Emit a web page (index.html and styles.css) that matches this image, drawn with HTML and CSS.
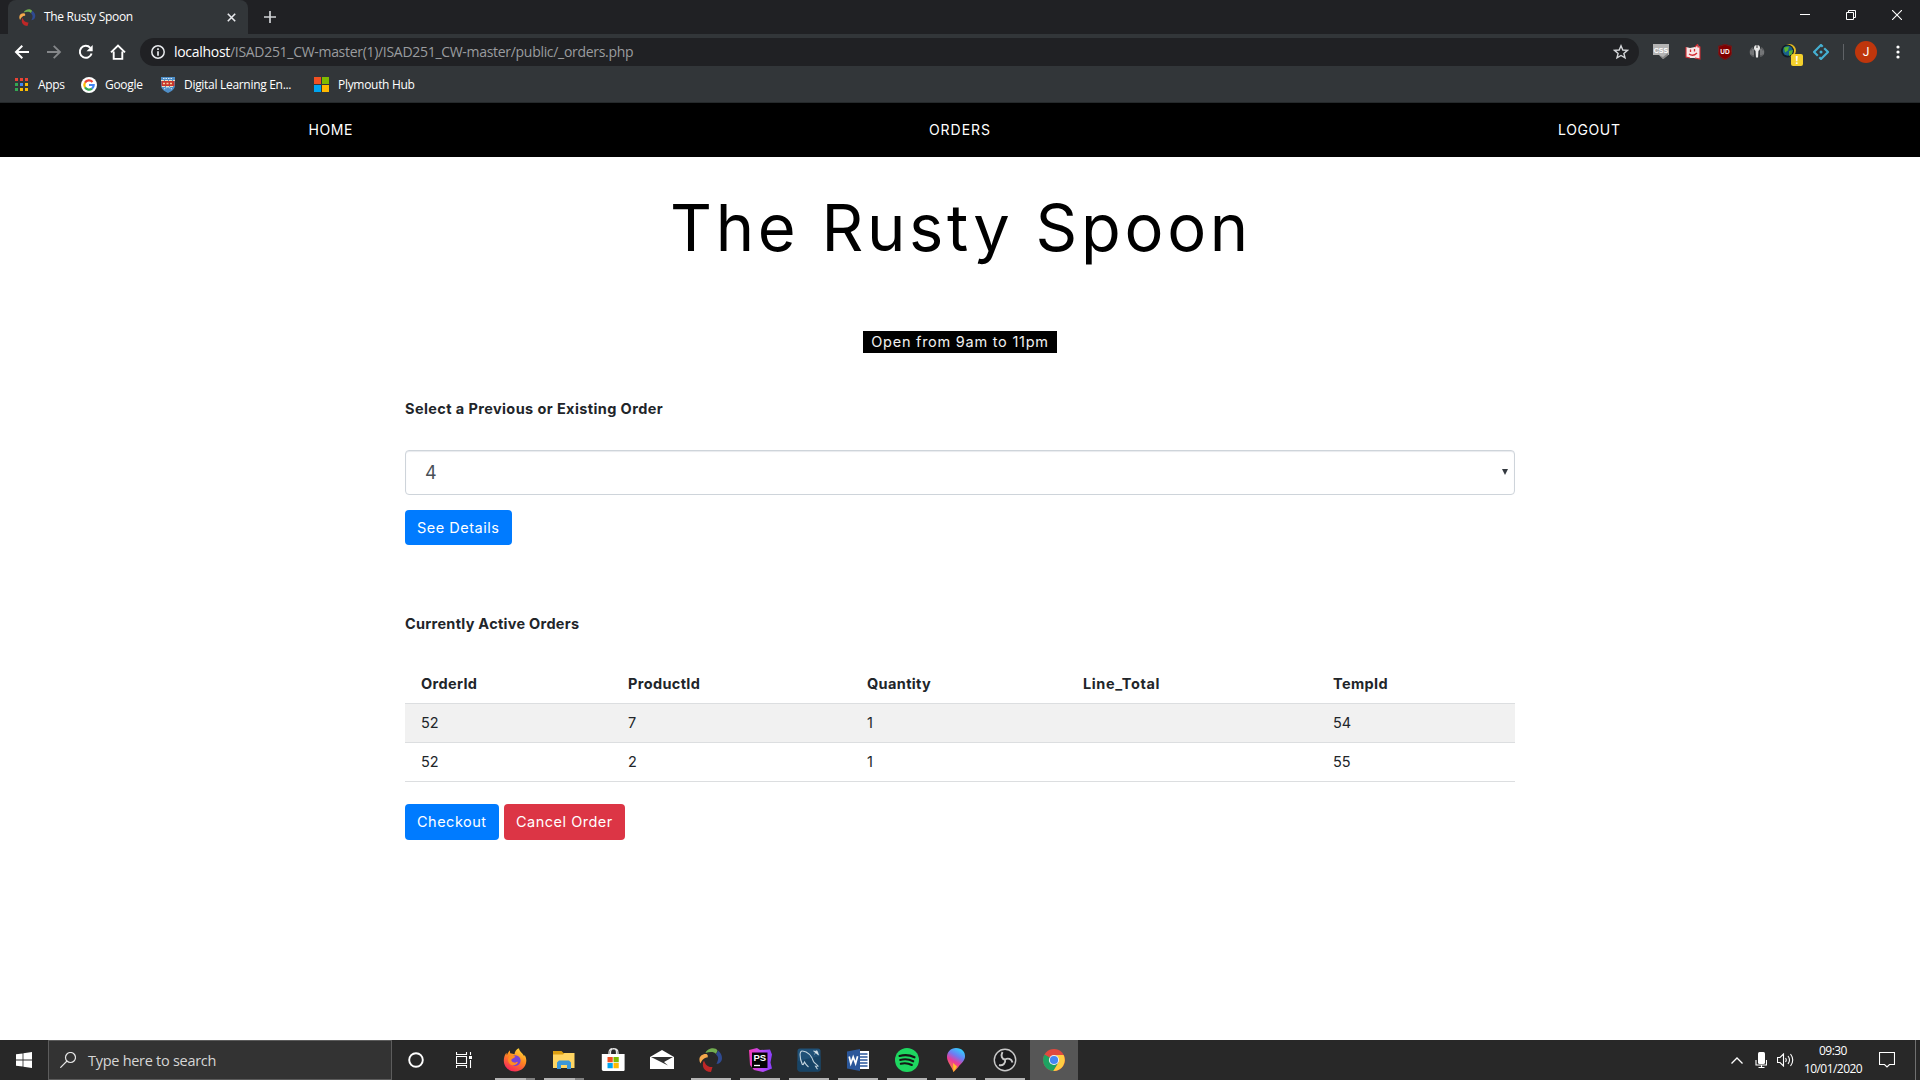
FILE: index.html
```html
<!DOCTYPE html>
<html lang="en">
<head>
<meta charset="utf-8">
<title>The Rusty Spoon</title>
<link rel="stylesheet" href="styles.css">
</head>
<body>
<div class="screen">
  <header class="browser">
    <div class="tabstrip">
      <div class="tab">
        <svg class="favicon" viewBox="0 0 24 24"><use href="#wamp"/></svg>
        <span class="tab-title">The Rusty Spoon</span>
        <svg class="tab-close" viewBox="0 0 9 9"><path d="M.8.8l7.4 7.4M8.2.8L.8 8.2" stroke="#e8eaed" stroke-width="1.6"/></svg>
      </div>
      <svg class="newtab" viewBox="0 0 12 12"><path d="M6 0v12M0 6h12" stroke="#d0d2d5" stroke-width="1.7"/></svg>
      <div class="window-controls">
        <svg viewBox="0 0 10 10"><path d="M0 4.5h10" stroke="#fff"/></svg>
        <svg viewBox="0 0 10 10"><path d="M.5 2.5h7v7h-7zM2.5 2.5v-2h7v7h-2" fill="none" stroke="#fff"/></svg>
        <svg viewBox="0 0 10 10"><path d="M0 0l10 10M10 0L0 10" stroke="#fff" stroke-width="1.1"/></svg>
      </div>
    </div>
    <div class="toolbar">
      <div class="nav-buttons">
        <svg viewBox="0 0 16 16"><path d="M15 8H2.5M8.3 1.8L2 8l6.3 6.2" fill="none" stroke="#fff" stroke-width="2"/></svg>
        <svg viewBox="0 0 16 16"><path d="M1 8h12.500M7.700 1.800L14 8l-6.300 6.200" fill="none" stroke="#85878a" stroke-width="1.800"/></svg>
        <svg viewBox="0 0 16 16"><path d="M13.600 9.500A6 6 0 1 1 12.300 3.800" fill="none" stroke="#fff" stroke-width="2"/><path d="M14.700 1v6.200H8.500z" fill="#fff"/></svg>
        <svg viewBox="0 0 16 16"><path d="M3.700 7.500v7.400h8.600V7.500M1 8.400L8 1.500l7 6.900" fill="none" stroke="#fff" stroke-width="1.900"/></svg>
      </div>
      <div class="omnibox">
        <svg class="info" viewBox="0 0 14 14"><circle cx="7" cy="7" r="6.200" fill="none" stroke="#e8eaed" stroke-width="1.500"/><path d="M7 6.200v4.500M7 3.300v1.700" stroke="#e8eaed" stroke-width="1.700"/></svg>
        <span class="url"><b>localhost</b>/ISAD251_CW-master(1)/ISAD251_CW-master/public/_orders.php</span>
        <svg class="star" viewBox="0 0 16 16"><path d="M8 1.800l1.800 4.200 4.600.4-3.500 3 1.100 4.500L8 11.500l-4 2.400 1.100-4.500-3.500-3 4.600-.4z" fill="none" stroke="#d5d7da" stroke-width="1.400"/></svg>
      </div>
      <div class="extensions">
        <svg viewBox="0 0 16 16"><path d="M0 0h16v11h-2l-4 4-4-4H0z" fill="#b4b4b4"/><path d="M7 11.500l3 1.500 5-4v2.500L10.500 15z" fill="#858585"/><text x="8" y="8.500" text-anchor="middle" class="glyph css-glyph">CSS</text></svg>
        <svg viewBox="0 0 16 16"><path d="M1 3l4 1 5-1 3-3 .5 3 1.500-.5V15l-6-1-4 0-4-1z" fill="#f8e6e6"/><path d="M1 3v10l4 1M10 3l2.500-2.500.5 2.500 2 0V15l-5-1" stroke="#d42b32" stroke-width="1.100" fill="none"/><path d="M5.500 5.500v2.500M9.500 5v2.500M4 10q4 3 8-1" stroke="#d42b32" stroke-width="1.300" fill="none"/></svg>
        <svg viewBox="0 0 16 16"><path d="M8 0l7 2v6c0 4-3 6-7 8-4-2-7-4-7-8V2z" fill="#800000"/><path d="M8 .5l6.500 2v6c0 4-3 5-6.500 7-3.500-2-6.500-3-6.500-7v-6z" fill="none" stroke="#6b2020"/><text x="8" y="9.500" text-anchor="middle" class="glyph ub-glyph">UD</text></svg>
        <svg viewBox="0 0 16 16"><path d="M3.500 3C0 5-.5 10 3 12.500l2 .5V5zM12.500 3c3.500 2 4 7 .5 9.500l-2 .5V5z" fill="#5c5e60"/><path d="M2 6.500v4M4 5v6M12 5v6M14 6.500v4" stroke="#8c8e90"/><circle cx="8" cy="4" r="3" fill="#e8e8e8"/><path d="M6.500 6h3l-.5 7.500H7z" fill="#e8e8e8"/><path d="M8 1v3" stroke="#333"/></svg>
        <div class="ext-badged">
          <svg viewBox="0 0 16 16"><circle cx="8.500" cy="6.500" r="6.500" fill="#e4b920"/><circle cx="6.500" cy="7" r="6.500" fill="#111c24"/><circle cx="6.800" cy="6.800" r="5" fill="#19608a"/><path d="M3 3.500l5-1-1 4-3 2zM8 7l4-1-1 4-3 2z" fill="#59b32e"/></svg>
          <span class="ext-badge">!</span>
        </div>
        <svg viewBox="0 0 16 16"><path d="M9.700 2.700L8 1 1 8l3.800 3.800M6.300 13.300L8 15l7-7-3.800-3.800" fill="none" stroke="#45b0d2" stroke-width="2.200"/><circle cx="8" cy="8" r="1.500" fill="#45b0d2"/></svg>
      </div>
      <div class="divider"></div>
      <div class="avatar">J</div>
      <svg class="menu-dots" viewBox="0 0 4 16"><circle cx="2" cy="3" r="1.600"/><circle cx="2" cy="8" r="1.600"/><circle cx="2" cy="13" r="1.600"/></svg>
    </div>
    <div class="bookmarks">
      <svg class="bm-apps" viewBox="0 0 13 13"><path d="M0 0h3v3H0zM5 0h3v3H5zM10 0h3v3h-3z" fill="#ea4335"/><path d="M0 5h3v3H0zM0 10h3v3H0z" fill="#34a853"/><path d="M5 5h3v3H5z" fill="#4285f4"/><path d="M10 5h3v3h-3zM5 10h3v3H5zM10 10h3v3h-3z" fill="#fbbc04"/></svg>
      <span class="bm-1">Apps</span>
      <svg class="bm-google" viewBox="0 0 16 16"><circle cx="8" cy="8" r="8" fill="#fff"/><g fill="none" stroke-width="2.200"><path d="M11.500 4.900A4.700 4.700 0 0 0 4 5.600" stroke="#ea4335"/><path d="M4 5.600a4.700 4.700 0 0 0 0 4.800" stroke="#fbbc05"/><path d="M4 10.400a4.700 4.700 0 0 0 7 1.200" stroke="#34a853"/><path d="M11 11.600A4.700 4.700 0 0 0 12.700 8H8" stroke="#4285f4"/></g></svg>
      <span class="bm-2">Google</span>
      <svg class="bm-shield" viewBox="0 0 14 16"><path d="M0 0h14v8c0 4-3 6-7 8-4-2-7-4-7-8z" fill="#4f8fc8"/><path d="M.5 4h13v5H.5z" fill="#c8372d"/><path d="M0 3.500h14M1 9.500h12" stroke="#eee0c0" stroke-dasharray="3 1"/><path d="M3 12l4-2 4 2M2 1.500h10" stroke="#d9e8f4" fill="none" stroke-dasharray="1.500 1"/><path d="M2 6.500h10" stroke="#f3d6a0" stroke-width="1.500" stroke-dasharray="2 1.500"/></svg>
      <span class="bm-3">Digital Learning En...</span>
      <svg class="bm-ms" viewBox="0 0 15 15"><use href="#mslogo"/></svg>
      <span class="bm-4">Plymouth Hub</span>
    </div>
  </header>

  <nav class="site-nav">
    <a>HOME</a><a class="wide">ORDERS</a><a>LOGOUT</a>
  </nav>
  <main class="page">
    <h1>The Rusty Spoon</h1>
    <div class="hours-row"><span class="hours">Open from 9am to 11pm</span></div>
    <div class="container">
      <p class="label">Select a Previous or Existing Order</p>
      <div class="select"><span>4</span><svg viewBox="0 0 6 6"><path d="M0 0h6L3 6z" fill="#343a40"/></svg></div>
      <div class="actions details"><a class="btn primary">See Details</a></div>
      <p class="label second">Currently Active Orders</p>
      <table class="orders">
        <colgroup><col class="c1"><col class="c2"><col class="c3"><col class="c4"><col class="c5"></colgroup>
        <thead><tr><th>OrderId</th><th>ProductId</th><th>Quantity</th><th class="wide">Line_Total</th><th>TempId</th></tr></thead>
        <tbody>
          <tr><td>52</td><td>7</td><td>1</td><td></td><td>54</td></tr>
          <tr><td>52</td><td>2</td><td>1</td><td></td><td>55</td></tr>
        </tbody>
      </table>
      <div class="actions"><a class="btn primary checkout">Checkout</a><a class="btn danger">Cancel Order</a></div>
    </div>
  </main>

  <footer class="taskbar">
    <div class="cell"><svg class="i16" viewBox="0 0 16 16"><path d="M0 2.300L6.600 1.400v6.200H0zM7.400 1.300L16 0v7.600H7.400zM0 8.400h6.600v6.200L0 13.700zM7.400 8.400H16V16l-8.600-1.300z" fill="#fff"/></svg></div>
    <div class="search">
      <svg class="i16" viewBox="0 0 16 16"><circle cx="10.500" cy="5.500" r="5" fill="none" stroke="#e6e6e6" stroke-width="1.200"/><path d="M7 9L.3 15.700" stroke="#e6e6e6" stroke-width="1.200"/></svg>
      <span>Type here to search</span>
    </div>
    <div class="cell"><svg class="i16" viewBox="0 0 16 16"><circle cx="8" cy="8" r="6.800" fill="none" stroke="#fff" stroke-width="1.900"/></svg></div>
    <div class="cell"><svg class="i16" viewBox="0 0 16 16"><path d="M.5 0v2.500h10V0M.5 16v-2.500h10V16M.5 4.500h10v7H.5zM14.500 0v3M14.500 8v8" fill="none" stroke="#fff" stroke-width="1.100"/><path d="M13 4h3v3h-3z" fill="#fff"/></svg></div>
    <div class="apps">
      <div class="app run multi"><svg viewBox="0 0 24 24"><defs><linearGradient id="ff" x1=".8" y1="0" x2=".3" y2="1"><stop offset="0" stop-color="#ffe040"/><stop offset=".45" stop-color="#ff8a1f"/><stop offset="1" stop-color="#f5235c"/></linearGradient></defs><path d="M12 23.500C5.500 23.500.800 18.700.800 12.600c0-3.500 1.200-5.800 2.600-7.800l.5 2.400C4.800 5 6 3 6.800 2.500l.4 2.800c2 .2 3.300.5 4.300 1C11.700 3.500 13.500 1 16 .300c.2 2.500 1.600 3.400 3.300 5.100.9.900 1.500 2 1.800 2.900l.6-1.200c1.200 2 1.700 4 1.600 6-.3 6-5 10.400-11.300 10.400z" fill="url(#ff)"/><circle cx="12.300" cy="12.600" r="5.300" fill="#7543d8"/><path d="M6 8c2 .2 4.500-1 6.500.8L10 10.500c-2 .5-2 2-1 3 1 1 4 2 6 0-1 5.500-10 5-10-2z" fill="#ff8c23"/></svg></div>
      <div class="app run multi"><svg viewBox="0 0 24 24"><path d="M1 3h8.500l2 2H22v2H1z" fill="#dc9f12"/><path d="M1 6.500h10l1.500-1.500H22.500v15H1z" fill="#ffd562"/><path d="M5 21v-6.500L7 12.500h10l2 2V21h-4v-4H9v4z" fill="#3b97d9"/></svg></div>
      <div class="app"><svg viewBox="0 0 24 24"><path d="M8 7V4.500C8 2 9.500.700 11.500.700M9.500 7V4.500c0-5 6-5 6 0V7M12 .700c4 0 5 1.300 5 3.800V7" fill="none" stroke="#e8e8e8" stroke-width="1.200"/><path d="M.8 6h22.800v15.500c0 1-.5 1.500-1.500 1.500H2.500c-1 0-1.700-.7-1.700-1.700z" fill="#fff"/><g transform="translate(6.500 9) scale(.75)"><use href="#mslogo"/></g></svg></div>
      <div class="app"><svg viewBox="0 0 24 24"><path d="M0 9l12-7 12 7v12H0z" fill="#fff"/><path d="M1 9h22l-9 5 4 3.500L1 9z" fill="#303030"/></svg></div>
      <div class="app run"><svg viewBox="0 0 24 24"><g id="wamp"><path d="M6.500 5c1.500-5 10-6.500 12-2.500l-1.500 3.500C15 3.500 11 3.500 6.500 5z" fill="#72ad50"/><path d="M19 2.500c6 4.500 5 13-1.500 13.500C19 12 20.500 9.500 17 6.500z" fill="#2f4a91"/><path d="M7.500 6c1.500 1 1.500 2 1 3.500C5 9.500 3 12 1.500 15.500-1.500 10 2 5.500 7.500 6z" fill="#f6a94c"/><path d="M5 12.500c1.500 4.500 4 7 8.500 6.500L12 24C5 24 2 18 5 12.500z" fill="#bf2727"/></g></svg></div>
      <div class="app run"><svg viewBox="0 0 24 24"><defs><linearGradient id="ps"><stop offset="0" stop-color="#f73ab5"/><stop offset=".55" stop-color="#b74af7"/><stop offset="1" stop-color="#8a3ffc"/></linearGradient></defs><path d="M1 2l8-2 3 2 10-.5 2 5-1.500 8 1.500 6-9 3.500-9-2L2 17z" fill="url(#ps)"/><path d="M4 4.500h15.500V20H4z" fill="#050505"/><text x="5.500" y="13" class="glyph ps-glyph">PS</text><path d="M6 17.500h6" stroke="#fff" stroke-width="1.300"/></svg></div>
      <div class="app run"><svg viewBox="0 0 24 24"><rect x=".5" y=".5" width="23" height="23" rx="2.500" fill="#205177"/><path d="M.5 13L23.500 8v13q0 2.500-2.500 2.500H3q-2.500 0-2.500-2.500z" fill="#174466"/><path d="M5.500 17C2 9 2.500 2.500 5.500 3c7 1 9.500 6 11 10.500 1 2 3 2.500 4.500 4.500l-2.500.3 2 3M6 17l1.500-3c1 2 2 3.500 4 5" fill="none" stroke="#c4d5df" stroke-width="1.100"/><path d="M16.500 3l5 4-1-3.500zM20 2l-2.500 4.500" stroke="#dce7ed" stroke-width=".6" fill="#dce7ed"/></svg></div>
      <div class="app run"><svg viewBox="0 0 24 24"><path d="M12 3h11v18H12z" fill="#fff"/><path d="M14 6h7.500M14 9h7.500M14 12h7.500M14 15h7.500M14 18h7.500" stroke="#2b579a" stroke-width="1.400"/><path d="M1 3.500L14 1v22L1 20.500z" fill="#2b579a"/><path d="M3.200 8.500l1.600 7 2.400-6.500 2.400 6.500 2-7.200" fill="none" stroke="#fff" stroke-width="1.700"/></svg></div>
      <div class="app run"><svg viewBox="0 0 24 24"><circle cx="12" cy="12" r="12" fill="#1ed760"/><path d="M4.500 8c5-1.500 10.500-1 15 1.300M5.200 12c4.500-1.300 9-.8 13 1.300M5.800 15.700c4-.9 7.500-.6 11 1.300" fill="none" stroke="#151515" stroke-width="2.100" stroke-linecap="round"/></svg></div>
      <div class="app run"><svg viewBox="0 0 24 24"><defs><linearGradient id="p3" x1=".75" y1="0" x2=".3" y2="1"><stop offset="0" stop-color="#2ad8ff"/><stop offset=".35" stop-color="#6f7cf2"/><stop offset=".6" stop-color="#e93c9c"/><stop offset="1" stop-color="#ff8b28"/></linearGradient></defs><path d="M12 0c6 0 9.500 4 9 9-.6 5-5.500 7.500-7 10.500L9.500 24c-1.500-5-6.500-10-6.500-15C3 4 6.500 0 12 0z" fill="url(#p3)"/><path d="M9 15l4 3.500L9.500 24z" fill="#ffc02b"/></svg></div>
      <div class="app run"><svg viewBox="0 0 24 24"><circle cx="12" cy="12" r="10.700" fill="#1a1a1c" stroke="#c8c8c8" stroke-width="1.400"/><path d="M9.500 4C7.500 8 9 11 12 11.500M12 11.500c3-2 6.500-.5 7.500 3M12 11.500c1 3.500-2 6.500-6 5.500" fill="none" stroke="#c8c8c8" stroke-width="1.900"/></svg></div>
      <div class="app active"><svg viewBox="0 0 24 24"><circle cx="12" cy="12" r="11" fill="#e04a3f"/><path d="M2.500 6.500A11 11 0 0 0 11.300 23L16.500 14.500 12 12z" fill="#1ea362"/><path d="M21.600 7A11 11 0 0 1 11.300 23L16.500 14.500 14 7z" fill="#ffcd42"/><circle cx="12" cy="12" r="5.100" fill="#f3f3f3"/><circle cx="12" cy="12" r="4.100" fill="#4587f3"/></svg></div>
    </div>
    <div class="tray">
      <svg class="chev" viewBox="0 0 12 7"><path d="M.5 6.500L6 1l5.500 5.500" fill="none" stroke="#fff" stroke-width="1.300"/></svg>
      <svg class="mic" viewBox="0 0 12 16"><rect x="3" y="0" width="7" height="12" rx="1.500" fill="#fff"/><path d="M1 8v5h10.500V8M6.500 13v2.500M3.500 15.500h6" fill="none" stroke="#fff" stroke-width="1.100"/></svg>
      <svg class="vol" viewBox="0 0 17 14"><path d="M.5 4.500h2.500L6.500 1v12L3 9.500H.5zM8.500 5q1.500 2 0 4M11 3q3 4 0 8M13.500 1q4.500 6 0 12" fill="none" stroke="#fff" stroke-width="1.100"/></svg>
      <div class="clock"><span>09:30</span><span>10/01/2020</span></div>
      <svg class="note" viewBox="0 0 16 16"><path d="M.5.500h15v12h-5L8 15l-2.500-2.500h-5z" fill="none" stroke="#fff" stroke-width="1.100"/></svg>
      <div class="peek"></div>
    </div>
  </footer>
</div>
<svg width="0" height="0" class="defs"><defs><g id="mslogo"><path d="M0 0h7v7H0z" fill="#f25022"/><path d="M8 0h7v7H8z" fill="#7fba00"/><path d="M0 8h7v7H0z" fill="#00a4ef"/><path d="M8 8h7v7H8z" fill="#ffb900"/></g></defs></svg>
</body>
</html>
```
FILE: styles.css
```css
* { box-sizing: border-box; }
body { margin: 0; background: #fff; font-family: Inter, "Open Sans", sans-serif; overflow: hidden; }
svg { display: block; flex: none; }
.defs { position: absolute; }
.screen { width: 1920px; height: 1080px; display: flex; flex-direction: column; }
.glyph { font-family: "Liberation Sans", sans-serif; font-weight: 700; fill: #fff; }

/* browser chrome */
.browser { height: 103px; background: #323639; border-bottom: 1px solid #25292b; font: 12px "Open Sans", sans-serif; color: #fff; }
.tabstrip { height: 34px; background: #202124; display: flex; align-items: center; padding-left: 8px; }
.tab { width: 240px; height: 34px; background: #323639; border-radius: 8px 8px 0 0; display: flex; align-items: center; padding: 0 12px 0 11px; }
.favicon { width: 17px; height: 17px; margin-right: 8px; }
.tab-title { flex: 1; letter-spacing: -.3px; white-space: nowrap; padding-bottom: 1px; }
.tab-close { width: 9px; height: 9px; }
.newtab { width: 12px; height: 12px; margin-left: 16px; }
.window-controls { margin-left: auto; display: flex; gap: 36px; padding: 0 18px 5px 0; }
.window-controls svg { width: 10px; height: 10px; }
.toolbar { height: 35px; display: flex; align-items: center; padding: 0 20px 0 14px; }
.nav-buttons { display: flex; gap: 16px; width: 126px; }
.nav-buttons svg { width: 16px; height: 16px; }
.omnibox { width: 1499px; height: 28px; border-radius: 14px; background: #202124; display: flex; align-items: center; padding: 0 10px 0 11px; }
.info { width: 14px; height: 14px; margin-right: 9px; }
.url { flex: 1; font-size: 14px; letter-spacing: -.3px; color: #9a9c9f; white-space: nowrap; }
.url b { font-weight: 400; color: #fff; }
.star { width: 16px; height: 16px; }
.extensions { display: flex; gap: 16px; margin-left: 14px; }
.extensions svg { width: 16px; height: 16px; }
.css-glyph { font-size: 7px; }
.ub-glyph { font-size: 6.5px; }
.ext-badged { position: relative; }
.ext-badge { position: absolute; left: 10px; top: 10px; width: 12px; height: 12px; border-radius: 2px; background: #f4d02c; font: 700 10px/12px "Open Sans", sans-serif; text-align: center; }
.divider { width: 1px; height: 16px; background: #606367; margin-left: 14px; }
.avatar { width: 22px; height: 22px; border-radius: 50%; background: #bf360c; margin-left: 11px; font: 12px/22px Roboto, sans-serif; text-align: center; }
.menu-dots { width: 4px; height: 16px; margin-left: auto; fill: #fff; }
.bookmarks { height: 31px; display: flex; align-items: center; padding-left: 15px; white-space: nowrap; letter-spacing: -.3px; }
.bookmarks span { padding-bottom: 1px; }
.bm-apps { width: 13px; height: 13px; margin-right: 10px; }
.bm-1 { width: 43px; }
.bm-google { width: 16px; height: 16px; margin-right: 8px; }
.bm-2 { width: 56px; }
.bm-shield { width: 14px; height: 16px; margin-right: 9px; }
.bm-3 { width: 130px; }
.bm-ms { width: 15px; height: 15px; margin-right: 9px; }

/* site */
.site-nav { height: 54px; background: #000; color: #fff; padding: 0 16px 1px; display: grid; grid-template-columns: repeat(3, 1fr); align-items: center; justify-items: center; font-size: 14px; letter-spacing: .6px; }
.site-nav .wide { letter-spacing: 1px; }
.page { flex: 1; }
h1 { margin: 0; height: 158px; font-weight: 400; font-size: 65px; line-height: 78px; letter-spacing: 3.7px; text-align: center; color: #000; padding: 32px 0 0 2px; }
.hours-row { height: 38px; display: flex; justify-content: center; padding-top: 16px; }
.hours { background: #000; color: #f1f1f1; width: 194px; height: 22px; line-height: 22px; font-size: 14.5px; letter-spacing: .75px; text-align: center; white-space: nowrap; }
.container { width: 1110px; margin: 0 auto; color: #212529; font-size: 14.5px; }
.label { margin: 0; padding-top: 44px; height: 97px; line-height: 24px; font-weight: 700; letter-spacing: .4px; }
.label.second { height: 104px; padding-top: 67px; letter-spacing: .28px; }
.select { height: 45px; border: 1px solid #ced4da; border-radius: 4px; display: flex; align-items: center; justify-content: space-between; padding: 0 6px 0 19px; color: #495057; font-size: 18px; box-shadow: inset 0 1px 1px #e8eaee; }
.select svg { width: 6px; height: 6px; margin-bottom: 1px; }
.actions { display: flex; gap: 5px; padding-top: 22px; }
.actions.details { padding-top: 15px; }
.btn { height: 36px; border-radius: 4px; color: #fff; padding: 0 12px; line-height: 35px; letter-spacing: .5px; white-space: nowrap; }
.details .btn { height: 35px; }
.primary { background: #007bff; width: 107px; }
.checkout { width: 94px; }
.danger { background: #dc3545; width: 121px; }
.orders { width: 1110px; table-layout: fixed; border-collapse: collapse; margin-top: 15px; }
.c1 { width: 207px; } .c2 { width: 239px; } .c3 { width: 216px; } .c4 { width: 250px; } .c5 { width: 198px; }
.orders th, .orders td { height: 39px; padding: 0 16px; text-align: left; border-bottom: 1px solid #dcdee0; }
.orders th { letter-spacing: .35px; }
.orders .wide { letter-spacing: .6px; }
.orders tbody tr:first-child { background: #f1f1f1; }

/* taskbar */
.taskbar { height: 40px; background: #282828; display: flex; color: #fff; font-family: "Open Sans", sans-serif; }
.cell { width: 48px; display: flex; align-items: center; justify-content: center; }
.i16 { width: 16px; height: 16px; }
.search { width: 344px; background: #333; border: 1px solid #5c5c5c; display: flex; align-items: center; padding-left: 11px; gap: 12px; font-size: 14.5px; letter-spacing: -.28px; color: #d6d6d6; }
.apps { display: flex; gap: 1px; margin-left: 3px; }
.app { width: 48px; height: 40px; display: flex; flex-direction: column; align-items: center; justify-content: space-between; padding-top: 8px; }
.app svg { width: 24px; height: 24px; }
.ps-glyph { font-size: 9.5px; }
.run::after { content: ""; width: 40px; height: 2px; background: #b4b4b4; }
.multi::after { background: linear-gradient(90deg, #b4b4b4 31px, #808080 31px); }
.active { background: #565656; }
.tray { margin-left: auto; display: flex; align-items: center; }
.chev { width: 12px; height: 7px; margin-right: 12px; }
.mic { width: 12px; height: 16px; margin-right: 10px; }
.vol { width: 17px; height: 14px; }
.clock { width: 78px; display: flex; flex-direction: column; align-items: center; font-size: 12px; letter-spacing: -.55px; line-height: 18px; margin-right: 7px; }
.note { width: 16px; height: 16px; margin-right: 20px; }
.peek { width: 5px; height: 40px; border-left: 1px solid #707070; }
```
